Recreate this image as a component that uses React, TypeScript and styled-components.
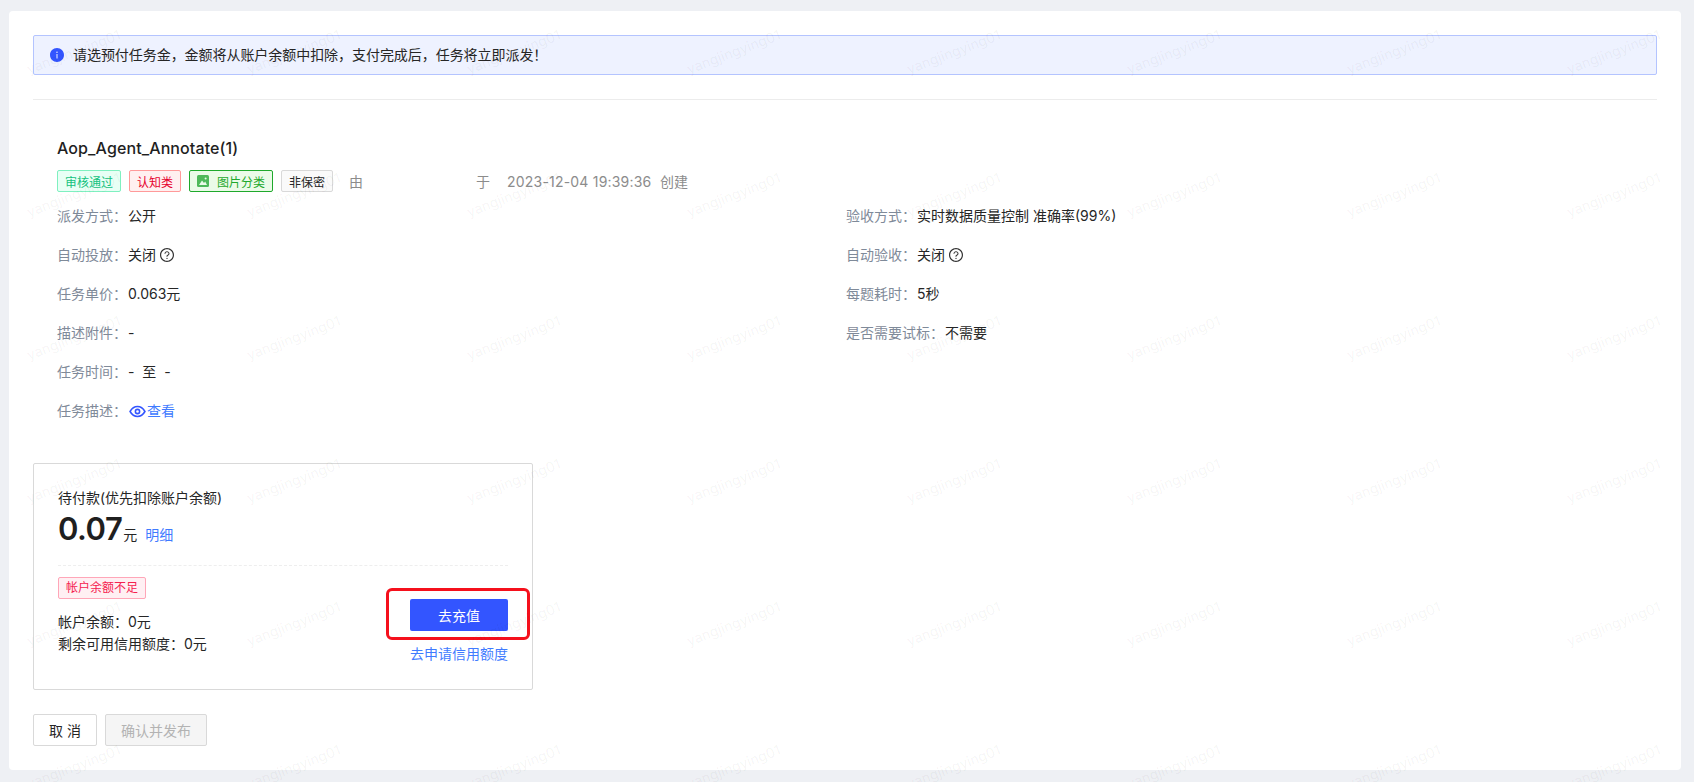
import styled, { createGlobalStyle } from 'styled-components';
import { AiFillInfoCircle, AiOutlineQuestionCircle } from 'react-icons/ai';

const GlobalStyle = createGlobalStyle`
  html, body {
    margin: 0;
    padding: 0;
    background: #eef0f4;
    font-family: Inter, "Noto Sans CJK SC", sans-serif;
    font-size: 14px;
    color: #262626;
  }
`

const Page = styled.div`
  position: relative;
  width: 1694px;
  height: 782px;
  box-sizing: border-box;
  padding: 11px 13px 12px 9px;
  overflow: hidden;
`
const Panel = styled.div`
  height: 100%;
  box-sizing: border-box;
  padding: 24px;
  background: #fff;
  border-radius: 4px;
`
const Alert = styled.div`
  display: flex;
  align-items: center;
  gap: 8px;
  height: 40px;
  box-sizing: border-box;
  padding: 0 15px;
  background: #eef2ff;
  border: 1px solid #b4c4ff;
  border-radius: 2px;
  line-height: 22px;
  letter-spacing: -0.05px;
  svg {
    color: #3355ff;
    font-size: 16px;
  }
`
const Divider = styled.div`
  height: 1px;
  margin-top: 24px;
  background: #ececec;
`
const Info = styled.div`
  padding: 36px 0 0 24px;
`
const Title = styled.div`
  font-size: 16px;
  line-height: 24px;
  font-weight: 500;
  letter-spacing: 0.1px;
  color: #1f1f1f;
`
const MetaRow = styled.div`
  display: flex;
  align-items: center;
  margin-top: 10px;
  height: 22px;
`
const Tag = styled.span<{ $bg: string; $line: string; $fg: string }>`
  display: inline-flex;
  align-items: center;
  gap: 8px;
  height: 22px;
  box-sizing: border-box;
  padding: 0 7px;
  margin-right: 8px;
  font-size: 12px;
  background: ${(p) => p.$bg};
  border: 1px solid ${(p) => p.$line};
  border-radius: 2px;
  color: ${(p) => p.$fg};
`
const MetaText = styled.span<{ $width: number }>`
  display: inline-block;
  width: ${(p) => p.$width}px;
  color: #8c8c8c;
  white-space: nowrap;
`
const MetaBy = styled(MetaText)`
  margin-left: 8px;
`
const MetaDate = styled(MetaText)`
  letter-spacing: 0.2px;
`
const Details = styled.div`
  display: grid;
  grid-template-columns: 789px 1fr;
  margin-top: 13px;
  row-gap: 17px;
`
const Field = styled.div`
  display: flex;
  align-items: center;
  height: 22px;
  line-height: 22px;
  white-space: nowrap;
`
const Label = styled.span`
  margin-right: 1px;
  color: #7f8a99;
`
const Help = styled.span`
  display: inline-flex;
  margin-left: 3px;
  font-size: 16px;
  color: #333;
`
const Range = styled.span`
  white-space: pre;
`
const Link = styled.a`
  display: inline-flex;
  align-items: center;
  color: #3f7bff;
  cursor: pointer;
`
const Eye = styled.svg`
  width: 17px;
  height: 17px;
  margin: 0 1px 0 1px;
`
const PayCard = styled.div`
  width: 500px;
  height: 227px;
  box-sizing: border-box;
  margin-top: 41px;
  padding: 23px 24px 0;
  border: 1px solid #d9d9d9;
  border-radius: 2px;
`
const CardLabel = styled.div`
  line-height: 22px;
`
const AmountRow = styled.div`
  display: flex;
  align-items: baseline;
  height: 46px;
  line-height: 40px;
  border-bottom: 1px dashed #eeeeee;
  padding-bottom: 10px;
`
const Amount = styled.span`
  font-size: 31px;
  font-weight: 600;
  letter-spacing: -0.5px;
  color: #1f1f1f;
  margin-right: 1px;
`
const Unit = styled.span`
  margin-right: 8px;
`
const CardBottom = styled.div`
  display: flex;
  justify-content: space-between;
  padding-top: 10px;
`
const Balance = styled.div`
  line-height: 22px;
`
const BalanceLines = styled.div`
  margin-top: 12px;
`
const RechargeColumn = styled.div`
  display: flex;
  flex-direction: column;
  width: 98px;
  padding-top: 23px;
`
const RechargeWrap = styled.div`
  position: relative;
  margin-bottom: 12px;
`
const Highlight = styled.div`
  position: absolute;
  inset: -11px -22px -9px -24px;
  border: 3px solid #f5101c;
  border-radius: 6px;
  pointer-events: none;
`
const PrimaryButton = styled.button`
  display: block;
  width: 98px;
  height: 32px;
  padding: 0;
  border: none;
  border-radius: 2px;
  background: #3355ff;
  color: #fff;
  font: inherit;
`
const RechargeLink = styled(Link)`
  line-height: 22px;
  white-space: nowrap;
`
const Footer = styled.div`
  display: flex;
  gap: 8px;
  margin-top: 24px;
`
const FooterButton = styled.button<{ $disabled?: boolean }>`
  height: 32px;
  padding: 0 15px;
  box-sizing: border-box;
  font: inherit;
  color: ${(p) => (p.$disabled ? '#b3b3b3' : '#262626')};
  background: ${(p) => (p.$disabled ? '#f5f5f5' : '#fff')};
  border: 1px solid #d9d9d9;
  border-radius: 2px;
`
const Watermark = styled.div`
  position: absolute;
  top: -20px;
  left: -37px;
  display: grid;
  grid-template-columns: repeat(8, 220px);
  grid-auto-rows: 143px;
  place-items: center;
  pointer-events: none;
`
const Mark = styled.span`
  font-size: 14px;
  color: rgba(0, 0, 0, 0.05);
  transform: rotate(-21deg);
  white-space: nowrap;
`

const App = (): JSX.Element => {
  return (
    <Page>
      <GlobalStyle />
      <Panel>
        <Alert>
          <AiFillInfoCircle />
          请选预付任务金，金额将从账户余额中扣除，支付完成后，任务将立即派发！
        </Alert>
        <Divider />
        <Info>
          <Title>Aop_Agent_Annotate(1)</Title>
          <MetaRow>
            <Tag $bg="#e8fff5" $line="#7ff0c0" $fg="#13c27e">审核通过</Tag>
            <Tag $bg="#fff0f0" $line="#ff9a9a" $fg="#e6002d">认知类</Tag>
            <Tag $bg="#ebfbe8" $line="#1fa92c" $fg="#1fa92c">
              <svg width="12" height="12" viewBox="0 0 12 12">
                <rect width="12" height="12" rx="1.5" fill="#4fb95a" />
                <path d="M2 10 5 5.5 7 8l1.2-1.4L10 10z" fill="#ebfbe8" />
                <circle cx="8.6" cy="3.4" r="1" fill="#ebfbe8" />
              </svg>
              图片分类
            </Tag>
            <Tag $bg="#fafafa" $line="#d9d9d9" $fg="#262626">非保密</Tag>
            <MetaBy $width={127}>由</MetaBy>
            <MetaText $width={31}>于</MetaText>
            <MetaDate $width={153}>2023-12-04 19:39:36</MetaDate>
            <MetaText $width={30}>创建</MetaText>
          </MetaRow>
          <Details>
            <Field><Label>派发方式：</Label>公开</Field>
            <Field><Label>验收方式：</Label>实时数据质量控制 准确率(99%)</Field>
            <Field>
              <Label>自动投放：</Label>关闭
              <Help><AiOutlineQuestionCircle /></Help>
            </Field>
            <Field>
              <Label>自动验收：</Label>关闭
              <Help><AiOutlineQuestionCircle /></Help>
            </Field>
            <Field><Label>任务单价：</Label>0.063元</Field>
            <Field><Label>每题耗时：</Label>5秒</Field>
            <Field><Label>描述附件：</Label>-</Field>
            <Field><Label>是否需要试标：</Label>不需要</Field>
            <Field><Label>任务时间：</Label><Range>{'-  至  -'}</Range></Field>
            <span />
            <Field>
              <Label>任务描述：</Label>
              <Link>
                <Eye viewBox="0 0 24 24" fill="none" stroke="#3355ff" strokeWidth="2.2">
                  <path d="M1.5 12S5.5 5 12 5s10.5 7 10.5 7-4 7-10.5 7S1.5 12 1.5 12z" />
                  <circle cx="12" cy="12" r="3" />
                </Eye>
                查看
              </Link>
            </Field>
          </Details>
        </Info>
        <PayCard>
          <CardLabel>待付款(优先扣除账户余额)</CardLabel>
          <AmountRow>
            <Amount>0.07</Amount>
            <Unit>元</Unit>
            <Link>明细</Link>
          </AmountRow>
          <CardBottom>
            <Balance>
              <Tag $bg="#fff0f3" $line="#ffa6b8" $fg="#f5224f">帐户余额不足</Tag>
              <BalanceLines>
                <div>帐户余额：0元</div>
                <div>剩余可用信用额度：0元</div>
              </BalanceLines>
            </Balance>
            <RechargeColumn>
              <RechargeWrap>
                <PrimaryButton>去充值</PrimaryButton>
                <Highlight />
              </RechargeWrap>
              <RechargeLink>去申请信用额度</RechargeLink>
            </RechargeColumn>
          </CardBottom>
        </PayCard>
        <Footer>
          <FooterButton>取 消</FooterButton>
          <FooterButton $disabled>确认并发布</FooterButton>
        </Footer>
      </Panel>
      <Watermark>
        {Array.from({ length: 48 }, (_, i) => (
          <Mark key={i}>yangjingying01</Mark>
        ))}
      </Watermark>
    </Page>
  )
}

export default App;
